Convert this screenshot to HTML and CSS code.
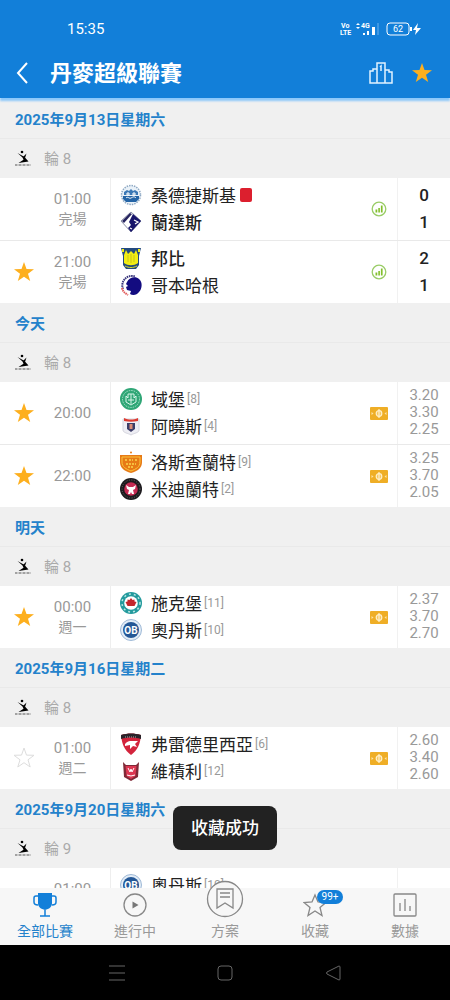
FILE: index.html
```html
<!DOCTYPE html>
<html lang="zh-Hant">

<head>
    <meta charset="UTF-8" />
    <meta name="viewport" content="width=device-width, initial-scale=1">
    <title>丹麥超級聯賽</title>
    <link rel="stylesheet" href="styles.css">
</head>

<body>
    <!-- shared icons -->
    <svg class="sprite" aria-hidden="true">
        <symbol id="star" viewBox="0 0 22 22">
            <path d="M11 1l2.500 7.100 7.500.2-6 4.500 2.200 7.200-6.200-4.300L4.800 20 7 12.800 1 8.300l7.500-.2z" />
        </symbol>
        <symbol id="league" viewBox="0 0 18 18">
            <circle cx="8" cy="3" r="1.300" />
            <path d="M3.500 4l7 4 4 4.500-10 1.500 5-3.200-1-2.300z" />
            <path d="M9 8l3.500-3.500-1.500 4.500z" />
            <path d="M1 16h16" stroke="#555" stroke-dasharray="2 .5 1 .5" />
        </symbol>
        <symbol id="stats" viewBox="0 0 16 16">
            <circle cx="8" cy="8" r="6.800" fill="none" stroke="#9c6" stroke-width="1.300" />
            <path d="M4.500 8.500h1.800v3H4.500zM7.300 7h1.600v4.500H7.300zM9.900 4.500h1.700v7H9.900z" fill="#82bf2c" />
        </symbol>
        <symbol id="ticket" viewBox="0 0 18 13">
            <rect width="18" height="13" rx="1" fill="#efae26" />
            <path d="M1.500 5l2 1.500-2 1.500zM16.500 5l-2 1.500 2 1.500z" fill="#fbe2a8" />
            <circle cx="9" cy="6.500" r="2.800" fill="#f5c65f" stroke="#fff0cb" stroke-width="1.200" />
            <path d="M9 2v9" stroke="#fff0cb" stroke-width="1.200" />
        </symbol>
        <symbol id="sonderjyske" viewBox="0 0 22 22">
            <circle cx="11" cy="11" r="9.500" fill="#e9f1f8" stroke="#8fa9c4" stroke-width="1.500" stroke-dasharray="1.500 1" />
            <path d="M4 8l3-2 2 1 2-2 2 2 2-1 3 2v3H4z" fill="#3b78b5" />
            <path d="M3 12h16v3l-3 3H6l-3-3z" fill="#2464a6" />
            <path d="M7 9h2v2H7zM13 9h2v2h-2zM6 14c2-2 3 1 5 0s3-2 5 0" fill="none" stroke="#fff" />
        </symbol>
        <symbol id="randers" viewBox="0 0 22 22">
            <path d="M11 1l10 9-10 11L1 10z" fill="#fff" stroke="#8a8fa8" />
            <path d="M13 3l8 7-10 11-3-4 3-3-2-3z" fill="#17146b" />
            <path d="M2 10l8-8 2 1-8 9z" fill="#26245f" />
            <path d="M14 9l4 2-3 2M10 17l2 1" fill="none" stroke="#fff" stroke-width="1.200" />
        </symbol>
        <symbol id="brondby" viewBox="0 0 22 22">
            <path d="M1 1h20l-2 8v9l-3 4H6l-3-4V9z" fill="#234a7d" />
            <path d="M6 3l2 4 3-3 3 3 2-4 2 5v8c-4 3-10 3-14 0V8z" fill="#f2ed13" />
            <path d="M2 2h2v3H2zM18 2h2v3h-2z" fill="#f2ed13" />
            <path d="M5 19c4 2 8 2 12 0" fill="none" stroke="#d8dc2a" />
            <path d="M8 8v7M11 7v9M14 8v7" stroke="#b8b41d" stroke-width=".7" />
        </symbol>
        <symbol id="kobenhavn" viewBox="0 0 22 22">
            <path d="M3 15A9.500 9.500 0 0 1 15 2.500" fill="none" stroke="#37347b" stroke-width="2" stroke-dasharray="1.500 .7" />
            <path d="M2 14c1 4 3 5 6 7" fill="none" stroke="#e05a5a" stroke-width="2" stroke-dasharray="1.500 .7" />
            <path d="M7 8c2-5 9-6 12-3 4 3 3 10 0 13-2 3-6 4-9 2l1-3-4-1-1-3 2-1-2-2z" fill="#130c80" />
        </symbol>
        <symbol id="viborg" viewBox="0 0 22 22">
            <circle cx="11" cy="11" r="11" fill="#2fa676" />
            <circle cx="11" cy="11" r="8.500" fill="none" stroke="#a7e3ca" stroke-dasharray="1.500 1" />
            <path d="M6 8l2 2V6h6v4l2-2v6l-5 3-5-3zM8 12h6M11 6v10" fill="none" stroke="#d8f5e9" />
        </symbol>
        <symbol id="agf" viewBox="0 0 22 22">
            <path d="M3 4h16v11c0 3-5 3-8 5-3-2-8-2-8-5z" fill="#eeeef4" stroke="#d5d5de" />
            <path d="M4 3c5 2 9 2 14 0v3c-5 1-9 1-14 0z" fill="#dd3b31" />
            <path d="M7 8h8v6l-4 3-4-3z" fill="#3b3c67" />
            <path d="M9.500 9h3v5h-3z" fill="#db8b75" />
        </symbol>
        <symbol id="nordsjaelland" viewBox="0 0 22 22">
            <path d="M0 4h22v7c0 6-4 9-11 11C4 20 0 17 0 11z" fill="#e77a16" />
            <path d="M2 6h18v5c0 5-4 7-9 9-5-2-9-4-9-9z" fill="none" stroke="#fac43c" />
            <circle cx="11" cy="1.500" r="1" fill="#e77a16" />
            <path d="M6 8v2M16 8v2M9 9h4M6 13h10M8 16h6" stroke="#fbd64b" stroke-width="1.500" stroke-dasharray="2 1" />
        </symbol>
        <symbol id="midtjylland" viewBox="0 0 22 22">
            <circle cx="11" cy="11" r="11" fill="#1c1a1d" />
            <circle cx="11" cy="11" r="9" fill="none" stroke="#69656a" stroke-dasharray="1 1.500" />
            <circle cx="11" cy="11" r="6.800" fill="#c52a52" />
            <path d="M6 7l3 2h4l3-2-1 4-2 1 1 4h-2l-1-2-1 2H8l1-4-2-1z" fill="#fff" />
        </symbol>
        <symbol id="silkeborg" viewBox="0 0 22 22">
            <circle cx="11" cy="11" r="11" fill="#239a9d" />
            <circle cx="11" cy="11" r="9" fill="none" stroke="#b9e5e3" stroke-width="1.500" stroke-dasharray="2 3" />
            <circle cx="11" cy="11" r="6.800" fill="#fff" />
            <path d="M11 6l1.500 2 2-.5v2l2 .5-2 4H7.500l-2-4 2-.5v-2l2 .5z" fill="#c3262c" />
        </symbol>
        <symbol id="odense" viewBox="0 0 22 22">
            <circle cx="11" cy="11" r="10.500" fill="#e3edf7" stroke="#9fb9d7" />
            <circle cx="11" cy="11" r="8" fill="#245796" />
        </symbol>
        <symbol id="fredericia" viewBox="0 0 22 22">
            <path d="M1 2c7-2 13-2 20 0-1 9-3 15-10 20C4 17 2 11 1 2z" fill="#d3243c" />
            <path d="M1 2c7-2 13-2 20 0v4c-7-2-13-2-20 0z" fill="#292329" />
            <path d="M5 4h12" stroke="#aaa" stroke-dasharray="1 1" />
            <path d="M5 11c3-4 6-3 13-3l-3 3 2 3-4-1-3 3v-4l-5 1z" fill="#fff" />
        </symbol>
        <symbol id="vejle" viewBox="0 0 22 22">
            <path d="M3 2l3 3h10l3-3-1 15-7 4-7-4z" fill="#7f2937" />
            <path d="M5.500 6h11l-1 10-4.500 3-4.500-3z" fill="#dc3752" />
            <path d="M8 8l2 4 1-3 1 3 2-4M7 15l4 1 4-1" fill="none" stroke="#fff" />
        </symbol>
    </svg>

    <div class="app">
        <header class="header">
            <div class="status">
                <span>15:35</span>
                <svg class="status-icons" width="84" height="18" viewBox="0 0 84 18" aria-hidden="true">
                    <text x="2" y="8" class="tiny-text">Vo</text>
                    <text x="1" y="15" class="tiny-text">LTE</text>
                    <path d="M17 5l2-2 2 2zM17 7l2 2 2-2z" />
                    <text x="22" y="8" class="tiny-text">4G</text>
                    <path d="M24 13h2v2h-2zM28 11h2v4h-2zM33 7h3v8h-3z" />
                    <path d="M39 3v12" stroke="#6db2ee" />
                    <rect x="48" y="3" width="22" height="12" rx="3" class="battery" />
                    <path d="M71 7h2v4h-2z" />
                    <text x="54" y="12" class="battery-text">62</text>
                    <path d="M79 3l-5 7h3l-1 5 6-7h-4z" />
                </svg>
            </div>
            <div class="title-bar">
                <button class="icon-btn back" aria-label="返回">
                    <svg width="14" height="22" viewBox="0 0 14 22"><path d="M12 1L3 11l9 10" fill="none" stroke="#fff" stroke-width="2" /></svg>
                </button>
                <h1>丹麥超級聯賽</h1>
                <button class="icon-btn" aria-label="積分榜">
                    <svg width="24" height="22" viewBox="0 0 24 22" fill="none" stroke="#e2f3ff" stroke-width="1.500">
                        <path d="M8 21V1h8v20M8 7H4v2H1v12h22V10h-3V8h-4M11 5l1-1v5" />
                    </svg>
                </button>
                <button class="icon-btn fav on" aria-label="收藏聯賽"><svg><use href="#star" /></svg></button>
            </div>
        </header>

        <main class="list">
            <section>
                <h2 class="date">2025年9月13日星期六</h2>
                <div class="league"><svg><use href="#league" /></svg>輪 8</div>
                <div class="match">
                    <span></span>
                    <div class="time"><span>01:00</span><span class="day">完場</span></div>
                    <div class="teams">
                        <div class="team"><svg><use href="#sonderjyske" /></svg>桑德捷斯基<i class="red-card"></i></div>
                        <div class="team winner"><svg><use href="#randers" /></svg>蘭達斯</div>
                    </div>
                    <svg class="info"><use href="#stats" /></svg>
                    <div class="score"><span>0</span><span>1</span></div>
                </div>
                <div class="match">
                    <button class="icon-btn fav on" aria-label="收藏"><svg><use href="#star" /></svg></button>
                    <div class="time"><span>21:00</span><span class="day">完場</span></div>
                    <div class="teams">
                        <div class="team winner"><svg><use href="#brondby" /></svg>邦比</div>
                        <div class="team"><svg><use href="#kobenhavn" /></svg>哥本哈根</div>
                    </div>
                    <svg class="info"><use href="#stats" /></svg>
                    <div class="score"><span>2</span><span>1</span></div>
                </div>
            </section>

            <section>
                <h2 class="date">今天</h2>
                <div class="league"><svg><use href="#league" /></svg>輪 8</div>
                <div class="match">
                    <button class="icon-btn fav on" aria-label="收藏"><svg><use href="#star" /></svg></button>
                    <div class="time"><span>20:00</span></div>
                    <div class="teams">
                        <div class="team"><svg><use href="#viborg" /></svg>域堡<small>[8]</small></div>
                        <div class="team"><svg><use href="#agf" /></svg>阿曉斯<small>[4]</small></div>
                    </div>
                    <svg class="info ticket"><use href="#ticket" /></svg>
                    <div class="odds"><span>3.20</span><span>3.30</span><span>2.25</span></div>
                </div>
                <div class="match">
                    <button class="icon-btn fav on" aria-label="收藏"><svg><use href="#star" /></svg></button>
                    <div class="time"><span>22:00</span></div>
                    <div class="teams">
                        <div class="team"><svg><use href="#nordsjaelland" /></svg>洛斯查蘭特<small>[9]</small></div>
                        <div class="team"><svg><use href="#midtjylland" /></svg>米迪蘭特<small>[2]</small></div>
                    </div>
                    <svg class="info ticket"><use href="#ticket" /></svg>
                    <div class="odds"><span>3.25</span><span>3.70</span><span>2.05</span></div>
                </div>
            </section>

            <section>
                <h2 class="date">明天</h2>
                <div class="league"><svg><use href="#league" /></svg>輪 8</div>
                <div class="match">
                    <button class="icon-btn fav on" aria-label="收藏"><svg><use href="#star" /></svg></button>
                    <div class="time"><span>00:00</span><span class="day">週一</span></div>
                    <div class="teams">
                        <div class="team"><svg><use href="#silkeborg" /></svg>施克堡<small>[11]</small></div>
                        <div class="team">
                            <svg><use href="#odense" /><text x="11" y="15" class="crest-text">OB</text></svg>奧丹斯<small>[10]</small>
                        </div>
                    </div>
                    <svg class="info ticket"><use href="#ticket" /></svg>
                    <div class="odds"><span>2.37</span><span>3.70</span><span>2.70</span></div>
                </div>
            </section>

            <section>
                <h2 class="date">2025年9月16日星期二</h2>
                <div class="league"><svg><use href="#league" /></svg>輪 8</div>
                <div class="match">
                    <button class="icon-btn fav" aria-label="收藏"><svg><use href="#star" /></svg></button>
                    <div class="time"><span>01:00</span><span class="day">週二</span></div>
                    <div class="teams">
                        <div class="team"><svg><use href="#fredericia" /></svg>弗雷德里西亞<small>[6]</small></div>
                        <div class="team"><svg><use href="#vejle" /></svg>維積利<small>[12]</small></div>
                    </div>
                    <svg class="info ticket"><use href="#ticket" /></svg>
                    <div class="odds"><span>2.60</span><span>3.40</span><span>2.60</span></div>
                </div>
            </section>

            <section>
                <h2 class="date">2025年9月20日星期六</h2>
                <div class="league"><svg><use href="#league" /></svg>輪 9</div>
                <div class="match">
                    <span></span>
                    <div class="time"><span>01:00</span><span class="day"></span></div>
                    <div class="teams">
                        <div class="team">
                            <svg><use href="#odense" /><text x="11" y="15" class="crest-text">OB</text></svg>奧丹斯<small>[10]</small>
                        </div>
                    </div>
                    <span></span>
                    <div class="odds"></div>
                </div>
            </section>
        </main>

        <nav class="tabs">
            <a href="#" class="tab active">
                <svg width="24" height="26" viewBox="0 0 24 26">
                    <path d="M5 1h14v10c0 4-3 6-7 7-4-1-7-3-7-7z" fill="#127fd9" />
                    <path d="M5 4H3q-2 0-2 2v4q0 3 4 3M19 4h2q2 0 2 2v4q0 3-4 3M12 18v6M7 24h10" fill="none" stroke="#127fd9" stroke-width="1.500" />
                </svg>
                全部比賽
            </a>
            <a href="#" class="tab">
                <svg width="24" height="26" viewBox="0 0 24 26">
                    <circle cx="12" cy="13" r="11" fill="none" stroke="#888" stroke-width="1.300" />
                    <path d="M9.500 9.500l6 3.500-6 3.500z" fill="#777" />
                </svg>
                進行中
            </a>
            <a href="#" class="tab plan">
                <svg width="38" height="38" viewBox="0 0 38 38">
                    <circle cx="19" cy="19" r="17.500" fill="#f7f7f7" stroke="#888" stroke-width="1.300" />
                    <path d="M11 9h16v19l-8-5-8 5zM14 13h10M14 17h10" fill="none" stroke="#888" stroke-width="1.300" />
                </svg>
                方案
            </a>
            <a href="#" class="tab">
                <svg width="24" height="26" viewBox="0 0 24 26">
                    <path d="M12 3l3 7 8 .5-6 5 2 8-7-4.500-7 4.500 2-8-6-5 8-.5z" fill="none" stroke="#888" stroke-width="1.300" />
                </svg>
                收藏
                <span class="badge">99+</span>
            </a>
            <a href="#" class="tab">
                <svg width="24" height="26" viewBox="0 0 24 26">
                    <path d="M2 2h20a1 1 0 0 1 1 1v20a1 1 0 0 1-1 1H2a1 1 0 0 1-1-1V3a1 1 0 0 1 1-1zM7 11v8M12 7v12M17 14v5" fill="none" stroke="#888" stroke-width="1.300" />
                </svg>
                數據
            </a>
        </nav>

        <div class="system-bar">
            <button class="icon-btn" aria-label="選單"><svg viewBox="0 0 18 18"><path d="M1 2h16M1 9h16M1 16h16" /></svg></button>
            <button class="icon-btn" aria-label="主畫面"><svg viewBox="0 0 18 18"><rect x="2" y="2" width="14" height="14" rx="3" /></svg></button>
            <button class="icon-btn" aria-label="返回"><svg viewBox="0 0 18 18"><path d="M3 8L15 2q1 0 1 1v12q0 1-1 1L3 10q-1-1 0-2z" /></svg></button>
        </div>

        <div class="toast" role="status">收藏成功</div>
    </div>
</body>

</html>
```

FILE: styles.css
```css
* {
    box-sizing: border-box;
}

body {
    margin: 0;
    font-family: Roboto, "Noto Sans CJK TC", sans-serif;
    font-size: 15px;
    color: #222;
    background: #fff;
}

.sprite {
    position: absolute;
    width: 0;
    height: 0;
}

.app {
    position: relative;
    display: flex;
    flex-direction: column;
    height: 100vh;
}

.icon-btn {
    display: flex;
    align-items: center;
    justify-content: center;
    padding: 0;
    border: none;
    background: none;
    cursor: pointer;
}

/* header */
.header {
    position: relative;
    z-index: 1;
    flex: none;
    padding-bottom: 5px;
    color: #fff;
    background: #127fd9;
    box-shadow: 0 3px 2px #8cc8fa;
}

.status {
    display: flex;
    align-items: center;
    justify-content: space-between;
    height: 53px;
    padding: 5px 27px 0 67px;
}

.status-icons {
    fill: #fff;
}

.tiny-text {
    font-size: 7px;
    font-weight: bold;
}

.battery {
    fill: none;
    stroke: #fff;
}

.battery-text {
    font-size: 9px;
}

.title-bar {
    display: flex;
    align-items: center;
    gap: 18px;
    height: 40px;
    padding: 0 17px 0 12px;
}

.title-bar h1 {
    flex: 1;
    margin: 0;
    padding-top: 2px;
    font-size: 22px;
    font-weight: 700;
    line-height: 32px;
}

.back {
    width: 20px;
}

/* match list */
.list {
    flex: 1;
    min-height: 0;
    padding-top: 1px;
    overflow: hidden;
}

.date {
    height: 40px;
    margin: 0;
    padding: 1px 0 0 15px;
    font-size: 15px;
    font-weight: 700;
    line-height: 40px;
    color: #2482cb;
    background: #f0f0f0;
    border-bottom: 1px solid #e9e9e9;
}

.league {
    display: flex;
    align-items: center;
    gap: 12px;
    height: 39px;
    padding: 0 0 2px 14px;
    color: #aaa;
    background: #f0f0f0;
}

.league svg {
    width: 18px;
    height: 18px;
}

.match {
    display: grid;
    grid-template-columns: 48px 62px 1fr 36px 53px;
    align-items: center;
    height: 62px;
}

.match + .match {
    height: 63px;
    border-top: 1px solid #e9e9e9;
}

.fav svg {
    width: 22px;
    height: 22px;
    fill: none;
    stroke: #ddd;
}

.fav.on svg {
    fill: #fdaf1e;
    stroke: none;
}

.time {
    display: flex;
    flex-direction: column;
    padding-right: 13px;
    line-height: 20px;
    text-align: center;
    color: #999;
}

.day {
    height: 20px;
    font-size: 14px;
}

.teams {
    align-self: stretch;
    padding: 3px 0 3px 9px;
    border-left: 1px solid #eee;
}

.team {
    display: flex;
    align-items: center;
    height: 27px;
    font-size: 17px;
    white-space: nowrap;
}

.team svg {
    width: 22px;
    height: 22px;
    margin-right: 9px;
}

.team small {
    margin-left: 2px;
    font-size: 12px;
    color: #999;
}

.winner {
    font-weight: 500;
}

.red-card {
    width: 12px;
    height: 14px;
    margin-left: 4px;
    border-radius: 2px;
    background: #dc1f2e;
}

.crest-text {
    font-size: 10px;
    font-weight: bold;
    text-anchor: middle;
    fill: #fff;
}

.info {
    justify-self: center;
    width: 16px;
    height: 16px;
}

.ticket {
    width: 18px;
    height: 13px;
}

.score,
.odds {
    display: flex;
    flex-direction: column;
    align-self: stretch;
    justify-content: center;
    border-left: 1px solid #f1f1f1;
    text-align: center;
}

.score {
    font-size: 17px;
    font-weight: 500;
    line-height: 27px;
}

.odds {
    padding-bottom: 2px;
    line-height: 17px;
    color: #999;
}

/* bottom tabs */
.tabs {
    position: relative;
    display: grid;
    grid-template-columns: repeat(5, 1fr);
    flex: none;
    height: 57px;
    background: #f7f7f7;
}

.tab {
    position: relative;
    display: flex;
    flex-direction: column;
    align-items: center;
    padding-top: 4px;
    font-size: 14px;
    line-height: 26px;
    color: #999;
    text-decoration: none;
    white-space: nowrap;
}

.tab.active {
    color: #2482cb;
}

.plan svg {
    margin-top: -12px;
}

.badge {
    position: absolute;
    top: 2px;
    left: 50%;
    margin-left: 2px;
    width: 26px;
    border-radius: 7px;
    background: #127fd9;
    color: #fff;
    font-size: 10px;
    line-height: 14px;
    text-align: center;
}

.system-bar {
    display: flex;
    align-items: center;
    justify-content: center;
    gap: 90px;
    flex: none;
    height: 55px;
    background: #000;
}

.system-bar svg {
    width: 18px;
    height: 18px;
    fill: none;
    stroke: #666;
}

.toast {
    position: absolute;
    bottom: 150px;
    left: 50%;
    z-index: 2;
    padding: 0 18px;
    border-radius: 8px;
    background: #222;
    color: #fff;
    font-size: 17px;
    font-weight: 500;
    line-height: 44px;
    transform: translateX(-50%);
}
```
